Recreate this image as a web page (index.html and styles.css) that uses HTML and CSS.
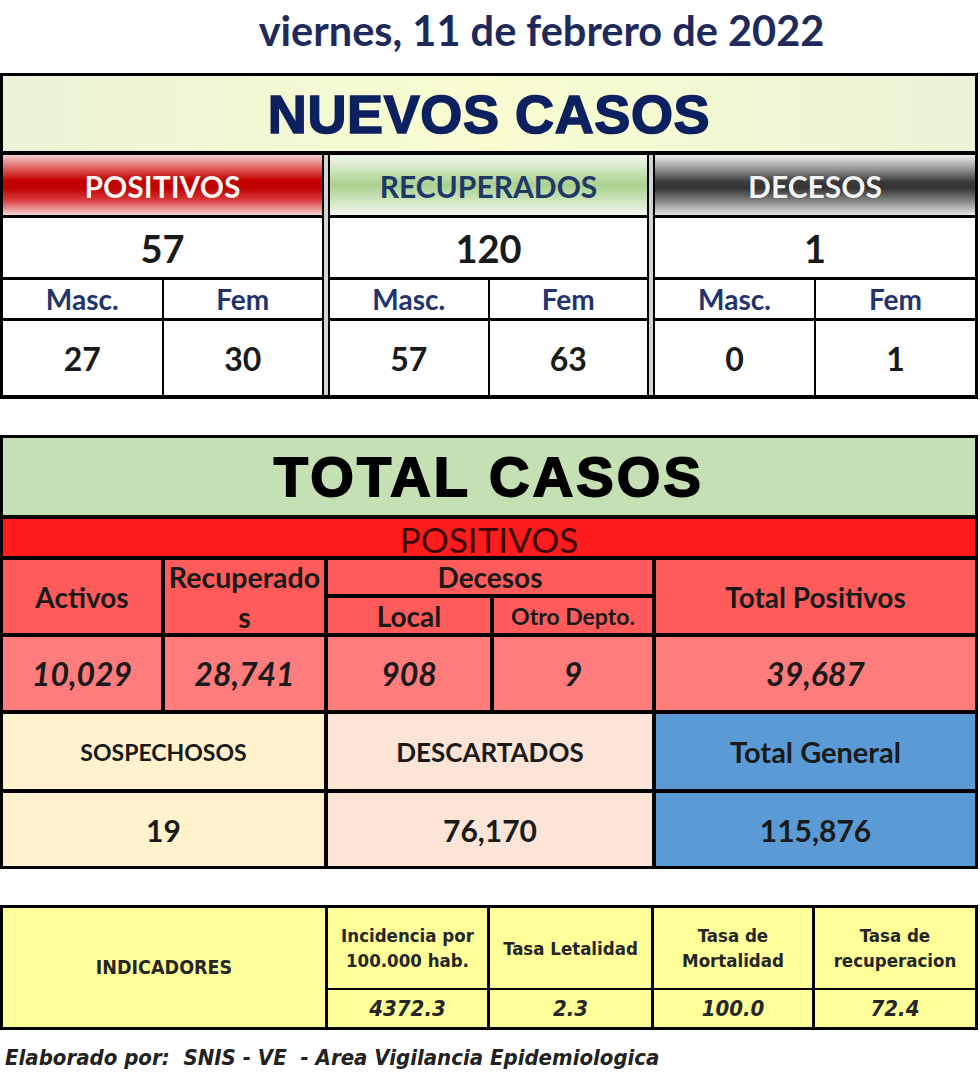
FILE: index.html
```html
<!DOCTYPE html>
<html lang="es">
<head>
<meta charset="utf-8">
<title>Reporte COVID-19</title>
<link rel="stylesheet" href="styles.css">
</head>
<body>
<div class="page">
  <div class="date">viernes, 11 de febrero de 2022</div>

  <section class="nuevos">
    <div class="n-title">NUEVOS CASOS</div>
    <div class="groups">
      <div class="group g1">
        <div class="gh pos">POSITIVOS</div>
        <div class="gt">57</div>
        <div class="gl">Masc.</div><div class="gl">Fem</div>
        <div class="gv">27</div><div class="gv">30</div>
      </div>
      <div class="group g2">
        <div class="gh rec">RECUPERADOS</div>
        <div class="gt">120</div>
        <div class="gl">Masc.</div><div class="gl">Fem</div>
        <div class="gv">57</div><div class="gv">63</div>
      </div>
      <div class="group g3">
        <div class="gh dec">DECESOS</div>
        <div class="gt">1</div>
        <div class="gl">Masc.</div><div class="gl">Fem</div>
        <div class="gv">0</div><div class="gv">1</div>
      </div>
    </div>
  </section>

  <section class="total">
    <div class="t-title">TOTAL CASOS</div>
    <div class="t-band">POSITIVOS</div>
    <div class="th c-act">Activos</div>
    <div class="th c-rec">Recuperado<br>s</div>
    <div class="th c-dec">Decesos</div>
    <div class="th c-loc">Local</div>
    <div class="th c-otro">Otro Depto.</div>
    <div class="th c-tp">Total Positivos</div>
    <div class="td">10,029</div>
    <div class="td">28,741</div>
    <div class="td">908</div>
    <div class="td">9</div>
    <div class="td">39,687</div>
    <div class="sh sosp span2 small">SOSPECHOSOS</div>
    <div class="sh desc span2">DESCARTADOS</div>
    <div class="sh tg big">Total General</div>
    <div class="sv sosp span2">19</div>
    <div class="sv desc span2">76,170</div>
    <div class="sv tg">115,876</div>
  </section>

  <section class="ind">
    <div class="ih i-main">INDICADORES</div>
    <div class="ih">Incidencia por<br>100.000 hab.</div>
    <div class="ih">Tasa Letalidad</div>
    <div class="ih">Tasa de<br>Mortalidad</div>
    <div class="ih">Tasa de<br>recuperacion</div>
    <div class="iv">4372.3</div>
    <div class="iv">2.3</div>
    <div class="iv">100.0</div>
    <div class="iv">72.4</div>
  </section>

  <p class="foot">Elaborado por:  SNIS - VE  - Area Vigilancia Epidemiologica</p>
</div>
</body>
</html>
```

FILE: styles.css
```css
html, body {
  margin: 0;
  padding: 0;
  background: #fff;
}

.page {
  width: 980px;
  font-family: Lato, "Open Sans", sans-serif;
  color: #1a1a1a;
}

.date {
  height: 73px;
  box-sizing: border-box;
  padding-top: 10px;
  padding-left: 103px;
  text-align: center;
  font-weight: 700;
  font-size: 41.5px;
  line-height: 1;
  color: #1f2a5c;
}

/* ---------- NUEVOS CASOS ---------- */
.nuevos {
  width: 978px;
  box-sizing: border-box;
  border: 3px solid #000;
  border-bottom-width: 4px;
}

.n-title {
  height: 75px;
  border-bottom: 4px solid #000;
  display: flex;
  align-items: center;
  justify-content: center;
  background: linear-gradient(90deg, #eaf3d8 0%, #fafdd0 50%, #eaf3d8 100%);
  font-family: "Liberation Sans", Arial, sans-serif;
  font-weight: 700;
  font-size: 54px;
  letter-spacing: 0.6px;
  color: #0d2160;
  -webkit-text-stroke: 1.6px #0d2160;
}

.groups {
  display: flex;
  gap: 4px;
  background: #d4d4d4;
}

.group {
  flex: none;
  display: grid;
  grid-template-columns: 1fr 1fr;
  grid-template-rows: 60px 59px 38px 74px;
  gap: 3px 2px;
  background: #000;
}

.g1 { width: 319px; border-right: 2px solid #000; }
.g2 { width: 317px; border-left: 2px solid #000; border-right: 2px solid #000; }
.g3 { width: 320px; border-left: 2px solid #000; }

.gh, .gt {
  grid-column: 1 / span 2;
}

.gh, .gt, .gl, .gv {
  display: flex;
  align-items: center;
  justify-content: center;
  font-weight: 700;
  background: #fff;
}

.gh {
  font-size: 30px;
  padding-top: 2px;
  box-sizing: border-box;
}

.pos {
  color: #fff4f0;
  background: linear-gradient(180deg, #f3cccc 0%, #e06060 22%, #c40000 42%, #c00000 55%, #d83a3a 75%, #f5d6d6 100%);
  text-shadow: 0 0 1px #700;
}

.rec {
  color: #1f3868;
  background: linear-gradient(180deg, #f3f8ee 0%, #cfe5bf 25%, #a9d08e 50%, #cde4bd 75%, #f1f7ec 100%);
}

.dec {
  color: #f4f4f4;
  background: linear-gradient(180deg, #eeeeee 0%, #9a9a9a 22%, #3a3a3a 45%, #333333 55%, #8a8a8a 78%, #e8e8e8 100%);
  text-shadow: 0 0 1px #222;
}

.gt {
  font-size: 38px;
}

.gl {
  font-size: 28px;
  color: #23336e;
}

.gv {
  font-size: 32px;
}

/* ---------- TOTAL CASOS ---------- */
.total {
  margin-top: 36px;
  width: 978px;
  box-sizing: border-box;
  border: 3px solid #000;
  display: grid;
  grid-template-columns: 158px 159px 162px 158px 319px;
  grid-template-rows: 77px 37px 34px 35px 73px 75px 73px;
  gap: 4px;
  background: #000;
}

.total > div {
  display: flex;
  align-items: center;
  justify-content: center;
  text-align: center;
}

.t-title {
  grid-column: 1 / -1;
  background: #c5e0b3;
  font-family: "Liberation Sans", Arial, sans-serif;
  font-weight: 700;
  font-size: 56px;
  letter-spacing: 3.2px;
  color: #000;
  -webkit-text-stroke: 1.8px #000;
}

.t-band {
  grid-column: 1 / -1;
  background: #ff1c1c;
  font-size: 35px;
  color: #3c0505;
  padding-top: 2px;
}

.th {
  background: #ff5b5b;
  font-weight: 700;
  font-size: 28px;
}

.c-act { grid-column: 1; grid-row: 3 / span 2; }
.c-rec { grid-column: 2; grid-row: 3 / span 2; line-height: 40px; font-size: 28.5px; }
.c-dec { grid-column: 3 / span 2; grid-row: 3; }
.c-loc { grid-column: 3; grid-row: 4; }
.c-otro { grid-column: 4; grid-row: 4; font-size: 23px; }
.c-tp { grid-column: 5; grid-row: 3 / span 2; }

.td {
  background: #ff7c7c;
  font-weight: 700;
  font-style: italic;
  font-size: 32px;
}

.span2 { grid-column: span 2; }

.sh {
  font-weight: 700;
  font-size: 26px;
}

.sh.small { font-size: 23px; }
.sh.big { font-size: 29px; }

.sv {
  font-weight: 700;
  font-size: 30px;
}

.sosp { background: #fff2cc; }
.desc { background: #fce4d6; }
.tg { background: #5b9bd5; }

/* ---------- INDICADORES ---------- */
.ind {
  margin-top: 36px;
  width: 978px;
  box-sizing: border-box;
  border: 3px solid #000;
  display: grid;
  grid-template-columns: 322px 159px 161px 158px 160px;
  grid-template-rows: 80px 37px;
  gap: 2px 3px;
  background: #000;
  font-family: "DejaVu Sans Condensed", "DejaVu Sans", sans-serif;
  color: #262626;
}

.ind > div {
  background: #ffff99;
  display: flex;
  align-items: center;
  justify-content: center;
  text-align: center;
}

.ih {
  font-weight: 700;
  font-size: 18.5px;
  line-height: 25px;
}

.i-main {
  grid-row: 1 / span 2;
  font-size: 19.5px;
}

.iv {
  font-weight: 700;
  font-style: italic;
  font-size: 22px;
}

.foot {
  margin: 15px 0 0 5px;
  white-space: pre;
  font-family: "DejaVu Sans Condensed", "DejaVu Sans", sans-serif;
  font-weight: 700;
  font-style: italic;
  font-size: 22px;
  line-height: 1.2;
  color: #222;
}
```
